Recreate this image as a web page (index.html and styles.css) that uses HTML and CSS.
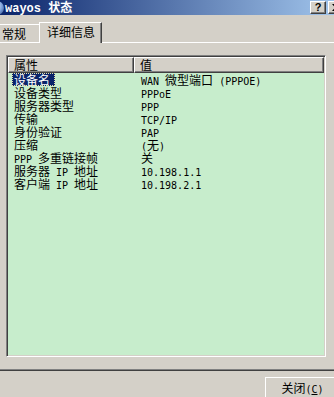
FILE: index.html
```html
<!DOCTYPE html>
<html lang="zh-CN">
<head>
    <meta charset="UTF-8">
    <meta name="viewport" content="width=device-width, initial-scale=1.0">
    <title>wayos 状态</title>
    <link rel="stylesheet" href="styles.css">
</head>
<body>
    <div class="window">
        <div class="titlebar">
            <span class="app-icon"></span>
            <span class="title"><span class="title-lat">wayos </span>状态</span>
            <span class="cap-btn">?</span>
            <span class="cap-btn">
                <svg width="8" height="7" viewBox="0 0 8 7"><path d="M0 0h2l2 2.5L6 0h2L5 3.5 8 7H6L4 4.5 2 7H0l3-3.5z" fill="#000"/></svg>
            </span>
        </div>

        <div class="tabs">
            <div class="tab">常规</div>
            <div class="tab active">详细信息</div>
        </div>

        <div class="panel">
            <div class="listview">
                <div class="lv-header">
                    <div class="lv-col col-prop">属性</div>
                    <div class="lv-col col-val">值</div>
                </div>
                <div class="lv-rows">
                    <div class="lv-row">
                        <span class="cell-prop"><span class="selected">设备名</span></span>
                        <span class="cell-val"><span class="lat">WAN </span>微型端口<span class="lat"> (PPPOE)</span></span>
                    </div>
                    <div class="lv-row">
                        <span class="cell-prop"><span class="plain">设备类型</span></span>
                        <span class="cell-val"><span class="lat">PPPoE</span></span>
                    </div>
                    <div class="lv-row">
                        <span class="cell-prop"><span class="plain">服务器类型</span></span>
                        <span class="cell-val"><span class="lat">PPP</span></span>
                    </div>
                    <div class="lv-row">
                        <span class="cell-prop"><span class="plain">传输</span></span>
                        <span class="cell-val"><span class="lat">TCP/IP</span></span>
                    </div>
                    <div class="lv-row">
                        <span class="cell-prop"><span class="plain">身份验证</span></span>
                        <span class="cell-val"><span class="lat">PAP</span></span>
                    </div>
                    <div class="lv-row">
                        <span class="cell-prop"><span class="plain">压缩</span></span>
                        <span class="cell-val"><span class="lat">(</span>无<span class="lat">)</span></span>
                    </div>
                    <div class="lv-row">
                        <span class="cell-prop"><span class="plain"><span class="lat">PPP </span>多重链接帧</span></span>
                        <span class="cell-val">关</span>
                    </div>
                    <div class="lv-row">
                        <span class="cell-prop"><span class="plain">服务器<span class="lat"> IP </span>地址</span></span>
                        <span class="cell-val"><span class="lat">10.198.1.1</span></span>
                    </div>
                    <div class="lv-row">
                        <span class="cell-prop"><span class="plain">客户端<span class="lat"> IP </span>地址</span></span>
                        <span class="cell-val"><span class="lat">10.198.2.1</span></span>
                    </div>
                </div>
            </div>
        </div>

        <div class="button-row">
            <button class="btn" type="button">关闭<span class="lat">(<u>C</u>)</span></button>
        </div>
    </div>
</body>
</html>
```

FILE: styles.css
```css
html, body {
    margin: 0;
    padding: 0;
    overflow: hidden;
}
body {
    width: 334px;
    height: 397px;
    background-color: #d4d0c8;
    font-family: "Noto Sans CJK SC", sans-serif;
    font-size: 12px;
    color: #000;
}
.window {
    width: 346px;
}
.lat {
    font-family: "DejaVu Sans Mono", monospace;
    font-size: 10px;
}

/* title bar */
.titlebar {
    height: 15px;
    display: flex;
    align-items: center;
    padding-right: 2px;
    background: linear-gradient(to right, #0a246a, #a6caf0);
}
.app-icon {
    width: 14px;
    height: 14px;
    margin-left: -10px;
    border-radius: 50%;
    background: radial-gradient(circle at 35% 35%, #ffffff, #7fa2dc 55%, #23407a);
}
.title {
    flex: 1;
    margin-left: 1px;
    color: #fff;
    font-weight: bold;
    font-size: 12px;
    line-height: 15px;
    white-space: pre;
}
.title-lat {
    font-family: "Liberation Mono", monospace;
    font-size: 12px;
}
.cap-btn {
    box-sizing: border-box;
    width: 16px;
    height: 13px;
    margin-left: 2px;
    margin-top: 1px;
    align-self: flex-start;
    display: flex;
    align-items: center;
    justify-content: center;
    background: #d4d0c8;
    border: 1px solid;
    border-color: #fff #404040 #404040 #fff;
    box-shadow: inset -1px -1px 0 #808080;
    font-family: "Liberation Sans", sans-serif;
    font-weight: bold;
    font-size: 11px;
    line-height: 11px;
}

/* tabs */
.tabs {
    box-sizing: border-box;
    height: 28px;
    display: flex;
    align-items: flex-end;
    margin-left: -6px;
    border-bottom: 1px solid #fff;
}
.tab {
    box-sizing: border-box;
    width: 45px;
    height: 18px;
    padding: 2px 0 0 7px;
    border-top: 1px solid #fff;
    border-left: 1px solid #fff;
    line-height: 13px;
}
.tab.active {
    width: 63px;
    height: 21px;
    margin-bottom: -1px;
    padding: 2px 0 0 7px;
    background: #d4d0c8;
    border-right: 1px solid #404040;
    box-shadow: inset -1px 0 0 #808080;
}

/* panel */
.panel {
    box-sizing: border-box;
    height: 328px;
    padding: 12px 0 0 6px;
    border-bottom: 1px solid #404040;
    box-shadow: inset 0 -1px 0 #808080;
}
.listview {
    box-sizing: border-box;
    width: 320px;
    height: 302px;
    padding: 1px;
    background: #c7edcc;
    border: 1px solid;
    border-color: #808080 #fff #fff #808080;
    box-shadow: inset 1px 1px 0 #404040, inset -1px -1px 0 #d4d0c8;
}
.lv-header {
    display: flex;
    height: 16px;
}
.lv-col {
    box-sizing: border-box;
    height: 16px;
    padding-left: 5px;
    background: #d4d0c8;
    border: 1px solid;
    border-color: #fff #404040 #404040 #fff;
    box-shadow: inset -1px -1px 0 #808080;
    line-height: 13px;
}
.col-prop {
    width: 126px;
}
.col-val {
    width: 190px;
}
.lv-row {
    display: grid;
    grid-template-columns: 126px 1fr;
    height: 13px;
    line-height: 13px;
    white-space: pre;
}
.cell-prop {
    padding-left: 4px;
}
.cell-val {
    padding-left: 7px;
}
.plain {
    padding-left: 2px;
}
.selected {
    display: inline-block;
    height: 13px;
    padding: 0 5px 0 2px;
    background: #0a246a;
    color: #fff;
    outline: 1px dotted #e6e2a8;
    outline-offset: -1px;
}

/* buttons */
.button-row {
    display: flex;
    justify-content: flex-end;
    padding: 6px 6px 0 0;
}
.btn {
    box-sizing: border-box;
    width: 75px;
    height: 23px;
    padding: 0;
    background: #d4d0c8;
    border: 1px solid;
    border-color: #fff #404040 #404040 #fff;
    box-shadow: inset -1px -1px 0 #808080;
    font-family: "Noto Sans CJK SC", sans-serif;
    font-size: 12px;
    color: #000;
    line-height: 19px;
}
```
